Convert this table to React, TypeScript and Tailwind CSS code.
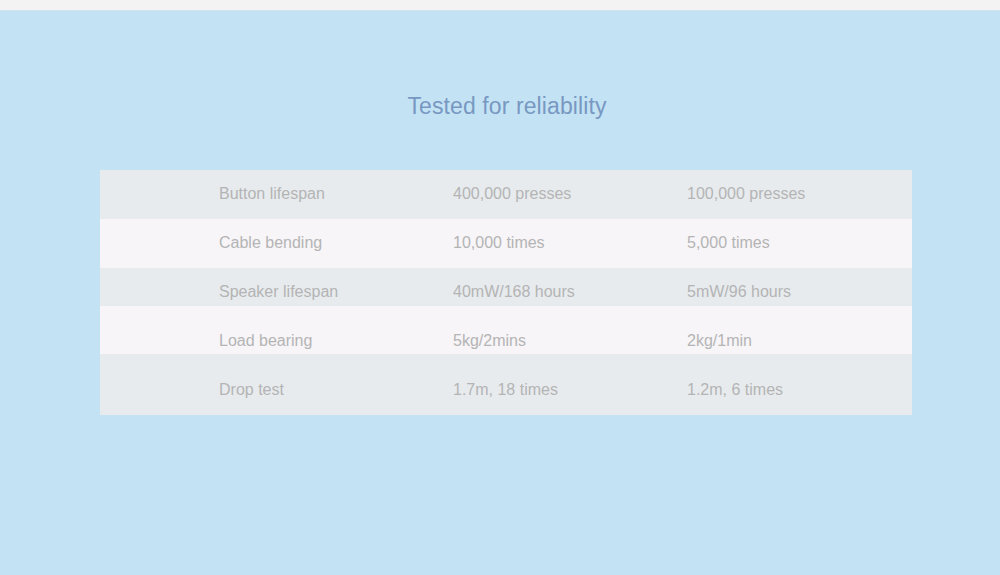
import React from 'react';

const rows = [
  { label: 'Button lifespan', ours: '400,000 presses', theirs: '100,000 presses', band: 'bg-[#e7ebed] h-[49px] pt-[12px]' },
  { label: 'Cable bending', ours: '10,000 times', theirs: '5,000 times', band: 'bg-[#f7f5f7] h-[49px] pt-[12px]' },
  { label: 'Speaker lifespan', ours: '40mW/168 hours', theirs: '5mW/96 hours', band: 'bg-[#e7ebed] h-[38px] pt-[12px]' },
  { label: 'Load bearing', ours: '5kg/2mins', theirs: '2kg/1min', band: 'bg-[#f7f5f7] h-[48px] pt-[23px]' },
  { label: 'Drop test', ours: '1.7m, 18 times', theirs: '1.2m, 6 times', band: 'bg-[#e7ebed] h-[61px] pt-[24px]' },
];

export default function App() {
  return (
    <div className="w-[1000px] h-[575px] flex flex-col bg-[#c3e3f4] font-['Liberation_Sans',Arial,sans-serif]">
      <div className="h-[10px] bg-[#f3f3f4]" />
      <div className="flex-1 border-t border-[#cde4ef]">
        <h2 className="pt-[79px] pl-[14px] text-center text-[23px] leading-[32px] font-normal tracking-[0.1px] text-[#7898c2]">
          Tested for reliability
        </h2>

        <div className="mt-[48px] ml-[100px] w-[812px]">
          {rows.map(row => (
            <div
              key={row.label}
              className={`grid grid-cols-[234px_234px_1fr] pl-[119px] text-[16px] leading-[24px] text-[#b4b4b5] ${row.band}`}
            >
              <span>{row.label}</span>
              <span>{row.ours}</span>
              <span>{row.theirs}</span>
            </div>
          ))}
        </div>
      </div>
    </div>
  );
}
